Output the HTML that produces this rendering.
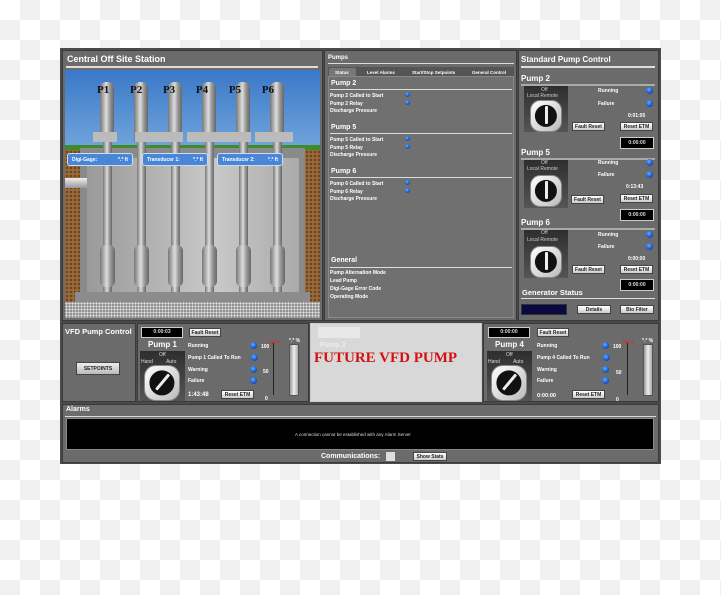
<!DOCTYPE html>
<html><head><meta charset="utf-8"><style>
*{margin:0;padding:0;box-sizing:border-box}
body{width:721px;height:595px;position:relative;overflow:hidden;font-family:"Liberation Sans",sans-serif;
background-color:#fff;background-image:linear-gradient(45deg,#f0f0f0 25%,transparent 25%,transparent 75%,#f0f0f0 75%),linear-gradient(45deg,#f0f0f0 25%,transparent 25%,transparent 75%,#f0f0f0 75%);background-size:40px 40px;background-position:0 0,20px 20px}
.a{position:absolute}
.pnl{position:absolute;background:#6b6b6b;border:1px solid #3a3a3a}
.t{position:absolute;color:#fff;font-weight:bold;font-size:9px;white-space:nowrap}
.s{position:absolute;color:#fff;font-weight:bold;font-size:5px;white-space:nowrap}
.hr{position:absolute;height:2px;background:#ddd}
.led{position:absolute;width:7px;height:7px;border-radius:50%;background:radial-gradient(circle at 40% 35%,#6af,#1458c8 60%,#0a2f6e)}
.btn{position:absolute;background:linear-gradient(#fff,#ccc);border:1px solid #444;font-size:5px;font-weight:bold;color:#222;text-align:center;white-space:nowrap}
.blk{position:absolute;background:#000;border:1px solid #ccc;color:#ddd;font-size:5px;text-align:center;font-weight:bold}
.knobbox{position:absolute;background:linear-gradient(#2e2e2e,#555)}
.knob{position:absolute;border-radius:32%;background:linear-gradient(135deg,#fff,#bbb);border:1px solid #888}
.knob i{position:absolute;left:50%;top:50%;width:74%;height:74%;transform:translate(-50%,-50%);border-radius:50%;background:#111}
.knob b{position:absolute;left:50%;top:18%;width:3px;height:60%;margin-left:-1.5px;background:#eee;border-radius:1px}
.pipe{position:absolute;background:linear-gradient(90deg,#777,#ddd 45%,#999 70%,#666)}
</style></head><body>
<div class="a" style="left:60px;top:48px;width:601px;height:416px;background:#4a4a4a"></div>

<div class="pnl" style="left:62px;top:50px;width:261px;height:271px"></div>
<div class="t" style="left:67px;top:54px">Central Off Site Station</div>
<div class="hr" style="left:66px;top:66px;width:252px"></div>
<div class="a" style="left:65px;top:70px;width:255px;height:248px;overflow:hidden;background:linear-gradient(#3a78c8,#7fb0e0 40%,#a9cbe8 60%)">
  <div class="a" style="left:0;top:75px;width:255px;height:7px;background:#3f8a2a"></div>
  <div class="a" style="left:0;top:80px;width:255px;height:170px;background:#9a6a3a;background-image:radial-gradient(#6b4422 1px,transparent 1.5px);background-size:4px 4px"></div>
  <div class="a" style="left:15px;top:78px;width:225px;height:150px;background:#8a8a8a"></div>
  <div class="a" style="left:22px;top:88px;width:212px;height:140px;background:linear-gradient(90deg,#9a9a9a,#c9c9c9 60%,#aaa)"></div>
  <div class="a" style="left:0;top:108px;width:22px;height:10px;background:linear-gradient(#eee,#999)"></div>
  <div class="a" style="left:10px;top:222px;width:235px;height:12px;background:#8c8c8c"></div>
  <div class="a" style="left:0;top:232px;width:255px;height:16px;background:#777;background-image:radial-gradient(#ddd 1px,transparent 1.5px);background-size:3px 3px"></div>
  <div class="pipe" style="left:35px;top:12px;width:14px;height:60px;border-radius:6px 6px 0 0"></div>
  <div class="pipe" style="left:69px;top:12px;width:14px;height:60px;border-radius:6px 6px 0 0"></div>
  <div class="pipe" style="left:103px;top:12px;width:14px;height:60px;border-radius:6px 6px 0 0"></div>
  <div class="pipe" style="left:137px;top:12px;width:14px;height:60px;border-radius:6px 6px 0 0"></div>
  <div class="pipe" style="left:171px;top:12px;width:14px;height:60px;border-radius:6px 6px 0 0"></div>
  <div class="pipe" style="left:205px;top:12px;width:14px;height:60px;border-radius:6px 6px 0 0"></div>
  <div class="a" style="left:28px;top:62px;width:200px;height:10px;background:linear-gradient(90deg,#bbb 12%,transparent 12%,transparent 21%,#bbb 21%,#bbb 45%,transparent 45%,transparent 47%,#bbb 47%,#bbb 79%,transparent 79%,transparent 81%,#bbb 81%)"></div>
  <div class="pipe" style="left:38px;top:72px;width:9px;height:150px"></div>
  <div class="pipe" style="left:72px;top:72px;width:9px;height:150px"></div>
  <div class="pipe" style="left:106px;top:72px;width:9px;height:150px"></div>
  <div class="pipe" style="left:140px;top:72px;width:9px;height:150px"></div>
  <div class="pipe" style="left:174px;top:72px;width:9px;height:150px"></div>
  <div class="pipe" style="left:208px;top:72px;width:9px;height:150px"></div>
  <div class="pipe" style="left:35px;top:175px;width:15px;height:42px;border-radius:6px"></div>
  <div class="pipe" style="left:69px;top:175px;width:15px;height:42px;border-radius:6px"></div>
  <div class="pipe" style="left:103px;top:175px;width:15px;height:42px;border-radius:6px"></div>
  <div class="pipe" style="left:137px;top:175px;width:15px;height:42px;border-radius:6px"></div>
  <div class="pipe" style="left:171px;top:175px;width:15px;height:42px;border-radius:6px"></div>
  <div class="pipe" style="left:205px;top:175px;width:15px;height:42px;border-radius:6px"></div>
  <div class="a" style="left:32px;top:14px;font:bold 11px 'Liberation Serif',serif;color:#111;word-spacing:18px;white-space:nowrap">P1 P2 P3 P4 P5 P6</div>
  <div class="a" style="left:2px;top:83px;width:66px;height:13px;background:#4a86d8;border:1px solid #cde;border-radius:3px;color:#fff;font-size:5px;font-weight:bold;padding:3px 4px">Digi-Gage: <span style="float:right">*.* ft</span></div>
  <div class="a" style="left:77px;top:83px;width:66px;height:13px;background:#4a86d8;border:1px solid #cde;border-radius:3px;color:#fff;font-size:5px;font-weight:bold;padding:3px 4px">Transducer 1: <span style="float:right">*.* ft</span></div>
  <div class="a" style="left:152px;top:83px;width:66px;height:13px;background:#4a86d8;border:1px solid #cde;border-radius:3px;color:#fff;font-size:5px;font-weight:bold;padding:3px 4px">Transducer 2: <span style="float:right">*.* ft</span></div>
</div>

<div class="pnl" style="left:324px;top:50px;width:193px;height:271px"></div>
<div class="t" style="left:328px;top:55px;font-size:6px">Pumps</div>
<div class="hr" style="left:328px;top:63px;width:186px;height:1px"></div>
<div class="a" style="left:328px;top:67px;width:186px;height:9px;background:#555"></div>
<div class="a" style="left:329px;top:68px;width:27px;height:8px;background:#777;border-radius:2px 2px 0 0"></div>
<div class="s" style="left:335px;top:70px;font-size:4.5px">Status</div>
<div class="s" style="left:367px;top:70px;font-size:4.5px">Level Alarms</div>
<div class="s" style="left:412px;top:70px;font-size:4.5px">Start/Stop Setpoints</div>
<div class="s" style="left:472px;top:70px;font-size:4.5px">General Control</div>
<div class="a" style="left:328px;top:76px;width:186px;height:242px;background:#707070;border:1px solid #888"></div>
<div class="t" style="left:331px;top:80px;font-size:7px">Pump 2</div><div class="hr" style="left:330px;top:89px;width:182px;height:1px"></div>
<div class="s" style="left:330px;top:93px">Pump 2 Called to Start</div><div class="led" style="left:405px;top:92px;width:5px;height:5px"></div>
<div class="s" style="left:330px;top:101px">Pump 2 Relay</div><div class="led" style="left:405px;top:100px;width:5px;height:5px"></div>
<div class="s" style="left:330px;top:108px">Discharge Pressure</div>
<div class="t" style="left:331px;top:124px;font-size:7px">Pump 5</div><div class="hr" style="left:330px;top:133px;width:182px;height:1px"></div>
<div class="s" style="left:330px;top:137px">Pump 5 Called to Start</div><div class="led" style="left:405px;top:136px;width:5px;height:5px"></div>
<div class="s" style="left:330px;top:145px">Pump 5 Relay</div><div class="led" style="left:405px;top:144px;width:5px;height:5px"></div>
<div class="s" style="left:330px;top:152px">Discharge Pressure</div>
<div class="t" style="left:331px;top:168px;font-size:7px">Pump 6</div><div class="hr" style="left:330px;top:177px;width:182px;height:1px"></div>
<div class="s" style="left:330px;top:181px">Pump 6 Called to Start</div><div class="led" style="left:405px;top:180px;width:5px;height:5px"></div>
<div class="s" style="left:330px;top:189px">Pump 6 Relay</div><div class="led" style="left:405px;top:188px;width:5px;height:5px"></div>
<div class="s" style="left:330px;top:196px">Discharge Pressure</div>
<div class="t" style="left:331px;top:257px;font-size:7px">General</div><div class="hr" style="left:330px;top:267px;width:182px;height:1px"></div>
<div class="s" style="left:330px;top:270px">Pump Alternation Mode</div>
<div class="s" style="left:330px;top:278px">Lead Pump</div>
<div class="s" style="left:330px;top:286px">Digi-Gage Error Code</div>
<div class="s" style="left:330px;top:294px">Operating Mode</div>

<div class="pnl" style="left:518px;top:50px;width:141px;height:271px"></div>
<div class="t" style="left:521px;top:55px;font-size:8px">Standard Pump Control</div>
<div class="hr" style="left:521px;top:66px;width:134px"></div>
<div class="t" style="left:521px;top:74px;font-size:8px">Pump 2</div>
<div class="a" style="left:521px;top:84px;width:134px;height:2px;background:#aaa"></div>
<div class="t" style="left:521px;top:148px;font-size:8px">Pump 5</div>
<div class="a" style="left:521px;top:158px;width:134px;height:2px;background:#aaa"></div>
<div class="t" style="left:521px;top:218px;font-size:8px">Pump 6</div>
<div class="a" style="left:521px;top:228px;width:134px;height:2px;background:#aaa"></div>

<div class="knobbox" style="left:524px;top:86px;width:44px;height:46px"></div>
<div class="s" style="left:541px;top:87px;color:#ccc;font-weight:normal">Off</div><div class="s" style="left:527px;top:93px;color:#ccc;font-weight:normal">Local Remote</div>
<div class="knob" style="left:530px;top:100px;width:32px;height:32px"><i></i><b></b></div>
<div class="s" style="left:598px;top:88px">Running</div><div class="led" style="left:646px;top:87px"></div>
<div class="s" style="left:598px;top:101px">Failure</div><div class="led" style="left:646px;top:100px"></div>
<div class="s" style="left:628px;top:113px">0:01:05</div>
<div class="btn" style="left:572px;top:122px;width:33px;height:9px;line-height:8px">Fault Reset</div>
<div class="btn" style="left:620px;top:122px;width:33px;height:9px;line-height:8px">Reset ETM</div>
<div class="blk" style="left:620px;top:137px;width:34px;height:12px;line-height:10px">0:00:00</div>

<div class="knobbox" style="left:524px;top:160px;width:44px;height:48px"></div>
<div class="s" style="left:541px;top:160px;color:#ccc;font-weight:normal">Off</div><div class="s" style="left:527px;top:166px;color:#ccc;font-weight:normal">Local Remote</div>
<div class="knob" style="left:530px;top:175px;width:32px;height:32px"><i></i><b></b></div>
<div class="s" style="left:598px;top:160px">Running</div><div class="led" style="left:646px;top:159px"></div>
<div class="s" style="left:598px;top:172px">Failure</div><div class="led" style="left:646px;top:171px"></div>
<div class="s" style="left:626px;top:184px">0:13:43</div>
<div class="btn" style="left:571px;top:195px;width:33px;height:9px;line-height:8px">Fault Reset</div>
<div class="btn" style="left:620px;top:194px;width:33px;height:9px;line-height:8px">Reset ETM</div>
<div class="blk" style="left:620px;top:209px;width:34px;height:12px;line-height:10px">0:00:00</div>

<div class="knobbox" style="left:524px;top:230px;width:44px;height:48px"></div>
<div class="s" style="left:541px;top:230px;color:#ccc;font-weight:normal">Off</div><div class="s" style="left:527px;top:237px;color:#ccc;font-weight:normal">Local Remote</div>
<div class="knob" style="left:530px;top:246px;width:32px;height:32px"><i></i><b></b></div>
<div class="s" style="left:598px;top:232px">Running</div><div class="led" style="left:646px;top:231px"></div>
<div class="s" style="left:598px;top:244px">Failure</div><div class="led" style="left:646px;top:243px"></div>
<div class="s" style="left:628px;top:256px">0:00:00</div>
<div class="btn" style="left:572px;top:265px;width:33px;height:9px;line-height:8px">Fault Reset</div>
<div class="btn" style="left:620px;top:265px;width:33px;height:9px;line-height:8px">Reset ETM</div>
<div class="blk" style="left:620px;top:279px;width:34px;height:12px;line-height:10px">0:00:00</div>
<div class="t" style="left:522px;top:288px;font-size:7.5px">Generator Status</div>
<div class="hr" style="left:521px;top:298px;width:134px;height:1px"></div>
<div class="a" style="left:521px;top:304px;width:46px;height:11px;background:#0a0a40;border:1px solid #333"></div>
<div class="btn" style="left:577px;top:305px;width:34px;height:9px;line-height:8px">Details</div>
<div class="btn" style="left:620px;top:305px;width:34px;height:9px;line-height:8px">Bio Filter</div>

<div class="pnl" style="left:62px;top:323px;width:74px;height:79px"></div>
<div class="t" style="left:65px;top:327px;font-size:7.5px">VFD Pump Control</div>
<div class="btn" style="left:76px;top:362px;width:44px;height:13px;line-height:12px;background:linear-gradient(#eee,#bbb)">SETPOINTS</div>

<div class="pnl" style="left:137px;top:323px;width:172px;height:79px"></div>
<div class="blk" style="left:141px;top:327px;width:42px;height:11px;line-height:9px">0:00:03</div>
<div class="btn" style="left:189px;top:328px;width:32px;height:9px;line-height:8px">Fault Reset</div>
<div class="t" style="left:148px;top:340px;font-size:8px">Pump 1</div>
<div class="knobbox" style="left:140px;top:351px;width:45px;height:50px"></div>
<div class="s" style="left:159px;top:352px;color:#ddd;font-weight:normal">Off</div><div class="s" style="left:141px;top:359px;color:#ddd;font-weight:normal;word-spacing:12px">Hand Auto</div>
<div class="knob" style="left:144px;top:365px;width:36px;height:36px"><i></i><b style="transform:rotate(40deg)"></b></div>
<div class="s" style="left:188px;top:343px">Running</div><div class="led" style="left:250px;top:342px"></div><div class="s" style="left:261px;top:344px">100</div>
<div class="s" style="left:188px;top:355px">Pump 1 Called To Run</div><div class="led" style="left:251px;top:354px"></div>
<div class="s" style="left:188px;top:367px">Warning</div><div class="led" style="left:250px;top:366px"></div><div class="s" style="left:263px;top:369px">50</div>
<div class="s" style="left:188px;top:378px">Failure</div><div class="led" style="left:250px;top:377px"></div>
<div class="s" style="left:188px;top:392px;font-size:6px">1:43:48</div>
<div class="btn" style="left:221px;top:390px;width:33px;height:9px;line-height:8px">Reset ETM</div>
<div class="s" style="left:265px;top:396px">0</div>
<div class="a" style="left:273px;top:343px;width:1px;height:52px;background:#222"></div>
<div class="s" style="left:269px;top:339px;color:#e22;font-size:4px">Speed</div>
<div class="a" style="left:289px;top:344px;width:10px;height:52px;background:linear-gradient(90deg,#999,#eee,#aaa);border:1px solid #555"></div>
<div class="s" style="left:289px;top:338px">*.* %</div>

<div class="a" style="left:310px;top:323px;width:172px;height:79px;background:#d8d8d8;border:1px solid #ccc"></div>
<div class="a" style="left:318px;top:327px;width:42px;height:11px;background:#e8e8e8"></div>
<div class="s" style="left:320px;top:342px;color:#eee;font-size:7px">Pump 3</div>
<div class="a" style="left:314px;top:350px;font:bold 15px 'Liberation Serif',serif;color:#d51010;white-space:nowrap">FUTURE VFD PUMP</div>

<div class="pnl" style="left:483px;top:323px;width:176px;height:79px"></div>
<div class="blk" style="left:488px;top:327px;width:42px;height:11px;line-height:9px">0:00:00</div>
<div class="btn" style="left:537px;top:328px;width:32px;height:9px;line-height:8px">Fault Reset</div>
<div class="t" style="left:495px;top:340px;font-size:8px">Pump 4</div>
<div class="knobbox" style="left:487px;top:351px;width:45px;height:50px"></div>
<div class="s" style="left:506px;top:352px;color:#ddd;font-weight:normal">Off</div><div class="s" style="left:488px;top:359px;color:#ddd;font-weight:normal;word-spacing:12px">Hand Auto</div>
<div class="knob" style="left:491px;top:365px;width:36px;height:36px"><i></i><b style="transform:rotate(40deg)"></b></div>
<div class="s" style="left:537px;top:343px">Running</div><div class="led" style="left:602px;top:342px"></div><div class="s" style="left:613px;top:344px">100</div>
<div class="s" style="left:537px;top:355px">Pump 4 Called To Run</div><div class="led" style="left:603px;top:354px"></div>
<div class="s" style="left:537px;top:367px">Warning</div><div class="led" style="left:602px;top:366px"></div><div class="s" style="left:616px;top:370px">50</div>
<div class="s" style="left:537px;top:378px">Failure</div><div class="led" style="left:602px;top:377px"></div>
<div class="s" style="left:537px;top:393px;font-size:5.5px">0:00:00</div>
<div class="btn" style="left:572px;top:390px;width:33px;height:9px;line-height:8px">Reset ETM</div>
<div class="s" style="left:616px;top:397px">0</div>
<div class="a" style="left:627px;top:343px;width:1px;height:52px;background:#222"></div>
<div class="s" style="left:622px;top:339px;color:#e22;font-size:4px">Speed</div>
<div class="a" style="left:643px;top:344px;width:10px;height:52px;background:linear-gradient(90deg,#999,#eee,#aaa);border:1px solid #555"></div>
<div class="s" style="left:642px;top:338px">*.* %</div>

<div class="pnl" style="left:62px;top:404px;width:597px;height:59px"></div>
<div class="t" style="left:66px;top:406px;font-size:7px">Alarms</div>
<div class="hr" style="left:65px;top:416px;width:591px;height:1px"></div>
<div class="a" style="left:66px;top:418px;width:588px;height:32px;background:#000;border:1px solid #888"></div>
<div class="s" style="left:295px;top:432px;color:#ddd;font-weight:normal;font-size:4.5px">A connection cannot be established with any Alarm Server</div>
<div class="t" style="left:321px;top:453px;font-size:7px">Communications:</div>
<div class="a" style="left:386px;top:452px;width:9px;height:9px;background:#ddd"></div>
<div class="btn" style="left:413px;top:452px;width:34px;height:9px;line-height:8px">Show Stats</div>
</body></html>
